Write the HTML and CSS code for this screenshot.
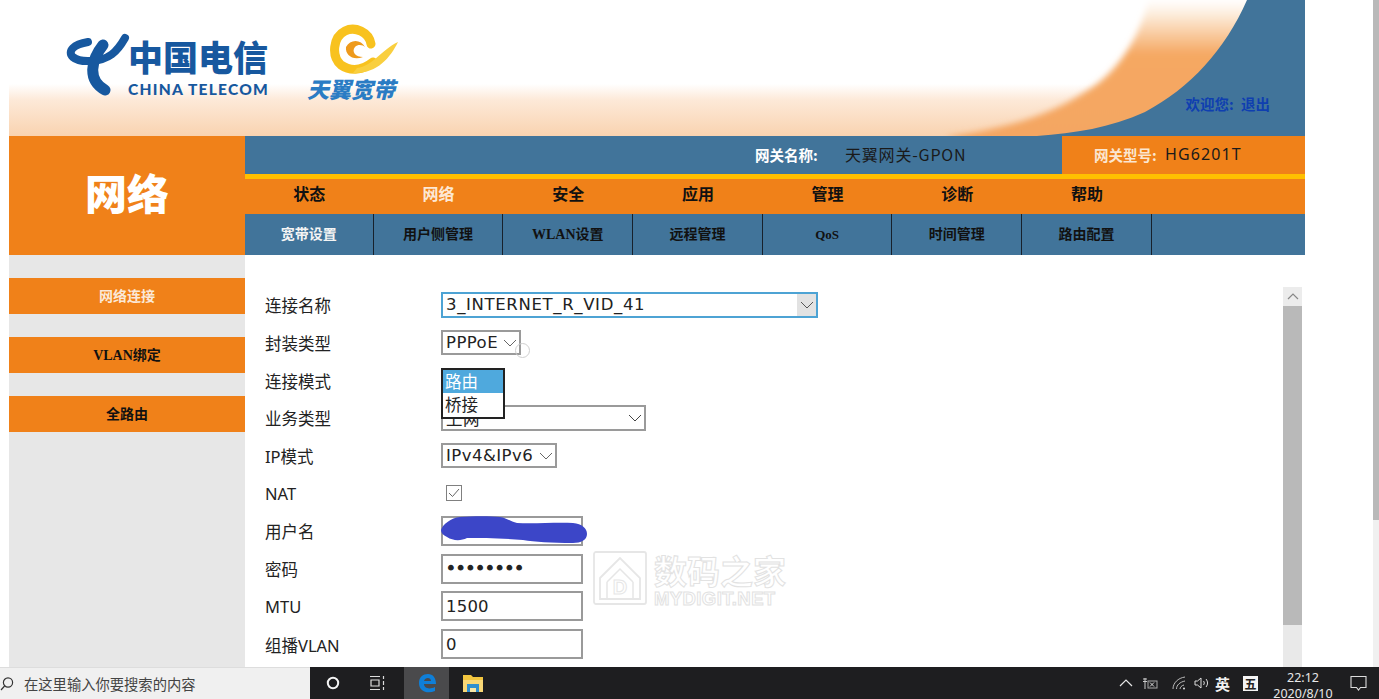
FILE: index.html
```html
<!DOCTYPE html>
<html lang="zh-CN">
<head>
<meta charset="utf-8">
<title>网络</title>
<link rel="stylesheet" href="styles.css">
</head>
<body>
<div class="screen">
  <div class="viewport">
    <div class="page">
      <header class="banner">
        <svg class="curve" width="500" height="136" viewBox="0 0 500 136">
          <defs>
            <linearGradient id="fadeV" gradientUnits="userSpaceOnUse" x1="0" y1="0" x2="0" y2="136">
              <stop offset="0" stop-color="#fff"/>
              <stop offset="0.1" stop-color="#fdeede"/>
              <stop offset="0.4" stop-color="#f5a862"/>
              <stop offset="1" stop-color="#f4a662"/>
            </linearGradient>
            <filter id="soft" x="-10%" y="-10%" width="120%" height="120%">
              <feGaussianBlur stdDeviation="3"/>
            </filter>
          </defs>
          <path d="M345 -6C335 40 310 75 280 92C245 115 205 128 140 137L200 150H470V-6Z" fill="url(#fadeV)" filter="url(#soft)"/>
          <path d="M500 0H442C420 50 385 88 340 112C305 128 270 133 232 136H500Z" fill="#41749a"/>
        </svg>
        <div class="brand">
          <svg class="telecom-mark" width="66" height="66" viewBox="0 0 66 66">
            <path d="M60 8C52 22 44 30 26 31C8 32 2 24 8 18C11 15 17 13 23 12" fill="none" stroke="#17589f" stroke-width="8" stroke-linecap="round"/>
            <path d="M38 15C26 30 22 50 40 60" fill="none" stroke="#17589f" stroke-width="11" stroke-linecap="round"/>
          </svg>
          <div class="telecom-name">
            <div class="telecom-cn">中国电信</div>
            <div class="telecom-en">CHINA TELECOM</div>
          </div>
        </div>
        <div class="tianyi">
          <svg class="swirl" width="72" height="54" viewBox="26 0 72 54">
            <path d="M68 22C66 10 52 4 42 9C30 15 28 34 38 43C48 50 60 48 70 40" fill="none" stroke="#f8c21e" stroke-width="9" stroke-linecap="round"/>
            <path d="M54 46C70 44 78 28 95 20C87 36 74 52 50 51Z" fill="#f9cf3f"/>
            <path d="M62 25C58 17 47 17 43 25C42 33 50 39 60 35C53 35 48 30 52 25C55 22 60 23 62 25Z" fill="#ee9a1c"/>
          </svg>
          <div class="tianyi-name">天翼宽带</div>
        </div>
        <div class="welcome">欢迎您: 退出</div>
      </header>

      <div class="masthead">
        <div class="section-title">网络</div>
        <div class="nav-stack">
          <div class="gateway">
            <div class="gateway-name"><b>网关名称:</b><span>天翼网关-GPON</span></div>
            <div class="gateway-model"><b>网关型号:</b><span>HG6201T</span></div>
          </div>
          <div class="main-nav">
            <span>状态</span><span class="active">网络</span><span>安全</span><span>应用</span><span>管理</span><span>诊断</span><span>帮助</span>
          </div>
          <div class="sub-nav">
            <span class="active">宽带设置</span><span>用户侧管理</span><span class="serif">WLAN设置</span><span>远程管理</span><span class="serif qos">QoS</span><span>时间管理</span><span>路由配置</span>
          </div>
        </div>
      </div>

      <div class="content">
        <aside class="sidebar">
          <a class="side-btn active">网络连接</a>
          <a class="side-btn serif">VLAN绑定</a>
          <a class="side-btn">全路由</a>
        </aside>
        <main class="main">
          <form class="form">
            <div class="row"><label>连接名称</label>
              <div class="sel sel-name focus"><span>3_INTERNET_R_VID_41</span><i class="arrow-box"><svg width="14" height="8" viewBox="0 0 14 8"><path d="M1 1l6 6 6-6" fill="none" stroke="#555" stroke-width="1"/></svg></i></div>
            </div>
            <div class="row"><label>封装类型</label>
              <div class="sel sel-pppoe"><span>PPPoE</span><svg width="14" height="8" viewBox="0 0 14 8"><path d="M1 1l6 6 6-6" fill="none" stroke="#666" stroke-width="1"/></svg><i class="cursor"></i></div>
            </div>
            <div class="row"><label>连接模式</label>
              <div class="dropdown"><div class="opt on">路由</div><div class="opt">桥接</div></div>
            </div>
            <div class="row"><label>业务类型</label>
              <div class="sel sel-type"><span>上网</span><svg width="14" height="8" viewBox="0 0 14 8"><path d="M1 1l6 6 6-6" fill="none" stroke="#444" stroke-width="1"/></svg></div>
            </div>
            <div class="row"><label>IP模式</label>
              <div class="sel sel-ip"><span>IPv4&amp;IPv6</span><svg width="14" height="8" viewBox="0 0 14 8"><path d="M1 1l6 6 6-6" fill="none" stroke="#666" stroke-width="1"/></svg></div>
            </div>
            <div class="row"><label>NAT</label>
              <div class="check"><svg width="12" height="10" viewBox="0 0 12 10"><path d="M1 5l3.500 3.500L11 1" fill="none" stroke="#666" stroke-width="1"/></svg></div>
            </div>
            <div class="row"><label>用户名</label>
              <div class="field-wrap"><input class="field" type="text" value="">
                <svg class="scribble" width="150" height="30" viewBox="0 0 150 30"><path d="M0 14C2 8 10 2 19 1C32 0 50 0 59 1C66 2 70 6 76 7C94 8 115 6 132 7C141 8 146 12 146 18C146 24 140 27 132 27C110 27 94 26 82 24C60 22 40 22 26 22C20 25 12 25 6 21C2 19 0 17 0 14Z" fill="#3c46c8"/></svg>
              </div>
            </div>
            <div class="row"><label>密码</label><input class="field secret" type="password" value="12345678"></div>
            <div class="row"><label>MTU</label><input class="field" type="text" value="1500"></div>
            <div class="row"><label>组播VLAN</label><input class="field" type="text" value="0"></div>
          </form>
          <div class="watermark">
            <svg width="54" height="54" viewBox="0 0 54 54"><rect x="1" y="1" width="52" height="52" rx="2" fill="none" stroke="#e6e6e6" stroke-width="1.800"/><path d="M7 27L27 7l20 20v21H7Z" fill="none" stroke="#e6e6e6" stroke-width="1.800"/><path d="M14 31v17M40 31v17M14 31L27 18l13 13" fill="none" stroke="#e6e6e6" stroke-width="1.500"/><text x="27" y="43" text-anchor="middle" class="wm-d">D</text></svg>
            <div class="wm-text"><div class="wm-cn">数码之家</div><div class="wm-en">MYDIGIT.NET</div></div>
          </div>
          <div class="inner-scroll">
            <div class="scroll-up"><svg width="12" height="7" viewBox="0 0 12 7"><path d="M1 6l5-5 5 5" fill="none" stroke="#888" stroke-width="1.200"/></svg></div>
            <div class="scroll-thumb"></div>
          </div>
        </main>
      </div>
    </div>
    <div class="outer-scroll"><div class="outer-thumb"></div></div>
  </div>

  <footer class="taskbar">
    <div class="search">
      <svg width="14" height="16" viewBox="0 0 14 16"><circle cx="8" cy="6.500" r="4.600" fill="none" stroke="#333" stroke-width="1.200"/><path d="M4.600 10L1 14" stroke="#333" stroke-width="1.200"/></svg>
      <span>在这里输入你要搜索的内容</span>
    </div>
    <div class="task-icons">
      <div class="tb-icon cortana"><svg width="14" height="14" viewBox="0 0 14 14"><circle cx="7" cy="7" r="5.200" fill="none" stroke="#f4f4f4" stroke-width="2"/></svg></div>
      <div class="tb-icon taskview"><svg width="18" height="16" viewBox="0 0 18 16"><path d="M2 1.500h10M2 14.500h10M3 5h8v6H3zM15.500 1v3M15.500 6v4M15.500 12v3" fill="none" stroke="#ddd" stroke-width="1.200"/></svg></div>
      <div class="tb-icon edge"><svg width="22" height="22" viewBox="0 0 22 22"><path d="M3 11C3 5 7 2 12 2C17 2 20 6 20 12H8C8 16 13 18 19 15V19C12 22 3 20 3 11ZM8 9H15C15 5 9 5 8 9Z" fill="#0f7fd8"/></svg></div>
      <div class="tb-icon explorer"><svg width="22" height="20" viewBox="0 0 22 20"><path d="M1 2h8l2 2h10v4H1Z" fill="#f3c63f"/><path d="M1 7h20v12H1Z" fill="#f8d776"/><path d="M5 11h12v8H5Z" fill="#2f8fd0"/><path d="M8 15h6v4H8Z" fill="#f8e7a8"/></svg></div>
    </div>
    <div class="tray">
      <svg class="tray-chevron" width="14" height="8" viewBox="0 0 14 8"><path d="M1 7l6-6 6 6" fill="none" stroke="#e6e6e6" stroke-width="1.200"/></svg>
      <svg class="tray-net" width="16" height="13" viewBox="0 0 16 13"><path d="M3 1v11M1 2h4M1 4.500h4" stroke="#ccc" fill="none"/><rect x="6" y="4" width="9" height="7" fill="none" stroke="#aaa"/><path d="M8 5.500l4 4M12 5.500l-4 4" stroke="#ddd"/></svg>
      <svg class="tray-wifi" width="14" height="14" viewBox="0 0 14 14"><path d="M1 13C1 7 6 2 13 1M4.500 13C4.500 9 8 6 13 5M8 13C8 11.500 9.500 9.500 12 9" fill="none" stroke="#bbb"/><circle cx="12" cy="12.500" r="1" fill="#ddd"/></svg>
      <svg class="tray-sound" width="16" height="14" viewBox="0 0 16 14"><path d="M1 5h2.500L7 2v10L3.500 9H1Z" fill="none" stroke="#ddd"/><path d="M9.500 5c1 1.200 1 2.800 0 4M12 3c2 2.500 2 5.500 0 8" fill="none" stroke="#ddd"/></svg>
      <span class="ime">英</span>
      <span class="wubi">五</span>
      <div class="clock"><div>22:12</div><div>2020/8/10</div></div>
      <svg class="notify" width="17" height="17" viewBox="0 0 17 17"><path d="M1 1.500h15v11h-5.500L8.500 15l-2-2.500H1Z" fill="none" stroke="#ddd" stroke-width="1.100"/></svg>
    </div>
  </footer>
</div>
</body>
</html>
```
FILE: styles.css
```css
* { box-sizing: border-box; }
html, body { margin: 0; padding: 0; height: 100%; overflow: hidden; background: #fff; }
body { font-family: "Noto Sans CJK SC", "Noto Sans", sans-serif; color: #222; }

.screen { display: flex; flex-direction: column; height: 699px; width: 1379px; }
.viewport { display: flex; flex: 1; min-height: 0; }
.page { width: 1296px; margin-left: 9px; display: flex; flex-direction: column; }
.outer-scroll { margin-left: 68px; width: 6px; background: #f0f0f0; }
.outer-thumb { height: 520px; background: #b9b9b9; }

/* banner */
.banner {
  position: relative; height: 136px; flex: none; display: flex; align-items: flex-start; overflow: hidden;
  background: linear-gradient(to bottom, #fff 0, #fff 84px, #fde9d8 100px, #f9d3b0 136px);
}
.curve { position: absolute; right: 0; top: 0; }
.brand { display: flex; margin: 30px 0 0 56px; position: relative; }
.telecom-mark { flex: none; }
.telecom-name { margin: 4px 0 0 -3px; width: 142px; }
.telecom-cn { font-size: 35px; line-height: 44px; font-weight: 900; color: #17589f; white-space: nowrap; height: 44px; }
.telecom-en { font-family: "Lato", "Liberation Sans", sans-serif; font-weight: 900; font-size: 15.500px; line-height: 16px; color: #17589f; letter-spacing: 1.250px; white-space: nowrap; margin-top: 3px; }
.tianyi { position: relative; margin: 22px 0 0 37px; width: 94px; }
.swirl { display: block; margin-left: 22px; }
.tianyi-name { font-size: 22px; line-height: 24px; font-weight: 900; font-style: italic; color: #2b7cc4; white-space: nowrap; }
.welcome { position: relative; margin: 94px 35px 0 auto; font-size: 14.500px; line-height: 20px; font-weight: 700; color: #0f3fb0; white-space: nowrap; word-spacing: 4px; }

/* masthead */
.masthead { display: grid; grid-template-columns: 236px 1fr; height: 119px; flex: none; }
.section-title { background: #f08119; color: #fff; font-size: 42px; font-weight: 900; display: flex; align-items: center; justify-content: center; padding-bottom: 8px; }
.nav-stack { display: flex; flex-direction: column; min-width: 0; }
.gateway { height: 38px; flex: none; display: flex; background: #41749a; }
.gateway-name { width: 817px; padding: 0 0 2px 510px; display: flex; align-items: center; white-space: nowrap; }
.gateway-name b { width: 90px; color: #fff; font-size: 14.500px; }
.gateway-name span { font-size: 16px; color: #1a1a1a; letter-spacing: .8px; }
.gateway-model { flex: 1; background: #f08119; padding: 0 0 2px 32px; display: flex; align-items: center; white-space: nowrap; }
.gateway-model b { width: 71px; color: #fbe6d0; font-size: 14.500px; }
.gateway-model span { font-size: 16px; color: #1a1a1a; font-family: "Noto Sans", sans-serif; letter-spacing: 1.100px; }
.main-nav { height: 40px; flex: none; display: grid; grid-template-columns: 128.700px repeat(6, 129.700px) 1fr; align-items: center; background: #f08119; border-top: 5px solid #ffc000; padding-bottom: 8px; font-size: 16px; font-weight: 700; color: #111; text-align: center; }
.main-nav .active { color: #fde8d4; }
.sub-nav { flex: 1; display: grid; grid-template-columns: 128.700px repeat(6, 129.700px) 1fr; align-items: stretch; background: #41749a; font-size: 14px; font-weight: 700; color: #111; text-align: center; }
.sub-nav span { display: flex; align-items: center; justify-content: center; border-right: 1px solid #17212c; padding-bottom: 4px; }
.sub-nav .qos { padding-bottom: 0; font-size: 13px; }
.sub-nav .active { color: #f4f4f4; }
.serif { font-family: "Liberation Serif", "Noto Sans CJK SC", serif; }

/* content */
.content { flex: 1; min-height: 0; display: grid; grid-template-columns: 236px 1fr; }
.sidebar { background: #e7e7e7; padding-top: 23px; display: flex; flex-direction: column; gap: 23px; }
.side-btn { height: 36px; background: #f08119; color: #111; font-size: 14px; font-weight: 700; display: flex; align-items: center; justify-content: center; padding-bottom: 2px; }
.side-btn.active { color: #fbe9d8; }

.main { position: relative; display: flex; min-width: 0; }
.form { padding: 31px 0 0 20px; flex: 1; min-width: 0; }
.row { height: 37.700px; display: flex; align-items: center; font-size: 16.500px; color: #222; }
.row label { width: 176px; flex: none; font-family: "Noto Sans", "Noto Sans CJK SC", sans-serif; padding-top: 1px; }

.sel { display: flex; align-items: center; justify-content: space-between; border: 2px solid #9a9a9a; background: #fff; height: 25px; padding-left: 3px; font-family: "DejaVu Sans", "Noto Sans CJK SC", sans-serif; font-size: 16.500px; letter-spacing: .45px; color: #222; white-space: nowrap; position: relative; }
.sel svg { flex: none; margin-right: 2px; }
.sel-name { width: 377px; height: 26px; letter-spacing: .65px; }
.sel-name.focus { border-color: #4da3d4; }
.arrow-box { width: 19px; align-self: stretch; background: #e2e2e2; display: flex; align-items: center; justify-content: center; }
.arrow-box svg { margin: 0; }
.sel-pppoe { width: 80px; }
.sel-type { width: 205px; height: 26px; }
.sel-ip { width: 116px; }
.cursor { position: absolute; left: 72px; top: 11px; width: 15px; height: 15px; border: 1.500px solid #cfcfcf; border-radius: 50%; }

.dropdown { position: relative; z-index: 2; width: 64px; height: 51px; margin-top: 13px; margin-bottom: -13px; border: 2px solid #222; background: #fff; font-size: 16.500px; line-height: 23px; }
.opt { padding-left: 2px; height: 23.500px; color: #222; }
.opt.on { background: #4fa9dd; color: #fff; }

.check { width: 16px; height: 16px; margin-left: 5px; border: 1.500px solid #808080; display: flex; align-items: center; justify-content: center; }

.field { display: block; width: 142px; height: 30px; border: 2px solid #9a9a9a; background: #fff; padding: 0 3px; font-family: "DejaVu Sans", sans-serif; font-size: 16.500px; letter-spacing: .2px; color: #222; outline: none; border-radius: 0; }
.field.secret { -webkit-text-stroke: 1px #222; letter-spacing: 0; }
.field-wrap { position: relative; width: 142px; }
.scribble { position: absolute; left: 0; top: 0; }

.watermark { position: absolute; left: 348px; top: 296px; display: flex; gap: 7px; }
.wm-d { font-family: "Liberation Sans", sans-serif; font-size: 20px; font-weight: 700; fill: #fff; stroke: #e6e6e6; stroke-width: 1; }
.wm-cn { font-size: 33px; line-height: 38px; font-weight: 700; color: #fff; -webkit-text-stroke: 1px #e2e2e2; white-space: nowrap; }
.wm-en { font-family: "Liberation Sans", sans-serif; font-size: 18.500px; line-height: 18px; font-weight: 700; color: #fff; -webkit-text-stroke: 1px #e2e2e2; white-space: nowrap; letter-spacing: .4px; margin-top: 1px; }

.inner-scroll { width: 19px; margin: 32px 3px 0 0; background: #e9e9e9; flex: none; display: flex; flex-direction: column; }
.scroll-up { height: 19px; display: flex; align-items: center; justify-content: center; background: #ececec; }
.scroll-thumb { height: 319px; background: #b9b9b9; }

/* taskbar */
.taskbar { height: 32px; flex: none; display: flex; background: #1e1e20; overflow: hidden; color: #eee; }
.search { width: 310px; background: #f0f0f0; display: flex; align-items: center; color: #444; font-size: 14.300px; border-top: 1px solid #ddd; white-space: nowrap; }
.search svg { flex: none; }
.search span { margin-left: 10px; }
.task-icons { display: flex; }
.tb-icon { height: 32px; display: flex; align-items: center; justify-content: center; }
.cortana { width: 46px; }
.taskview { width: 48px; padding-right: 6px; }
.edge { width: 45px; background: #4a4a4c; }
.explorer { width: 48px; }
.tray { margin-left: auto; display: flex; align-items: center; height: 32px; position: relative; }
.tray-chevron { margin-right: 9px; }
.tray-net { margin-right: 10px; }
.tray-wifi { margin-right: 8px; margin-left: 4px; }
.tray-sound { margin-right: 5px; }
.ime { font-size: 15px; font-weight: 700; color: #f2f2f2; width: 16px; margin-right: 12px; }
.wubi { width: 15px; height: 15px; background: #f4f4f4; color: #222; font-size: 12px; line-height: 15px; text-align: center; font-weight: 700; margin-right: 15px; }
.clock { width: 60px; text-align: center; font-family: "Noto Sans", sans-serif; font-size: 12.500px; line-height: 16px; color: #e8e8e8; white-space: nowrap; height: 32px; margin-top: 5px; margin-right: 17px; }
.notify { margin-right: 12px; }
```
